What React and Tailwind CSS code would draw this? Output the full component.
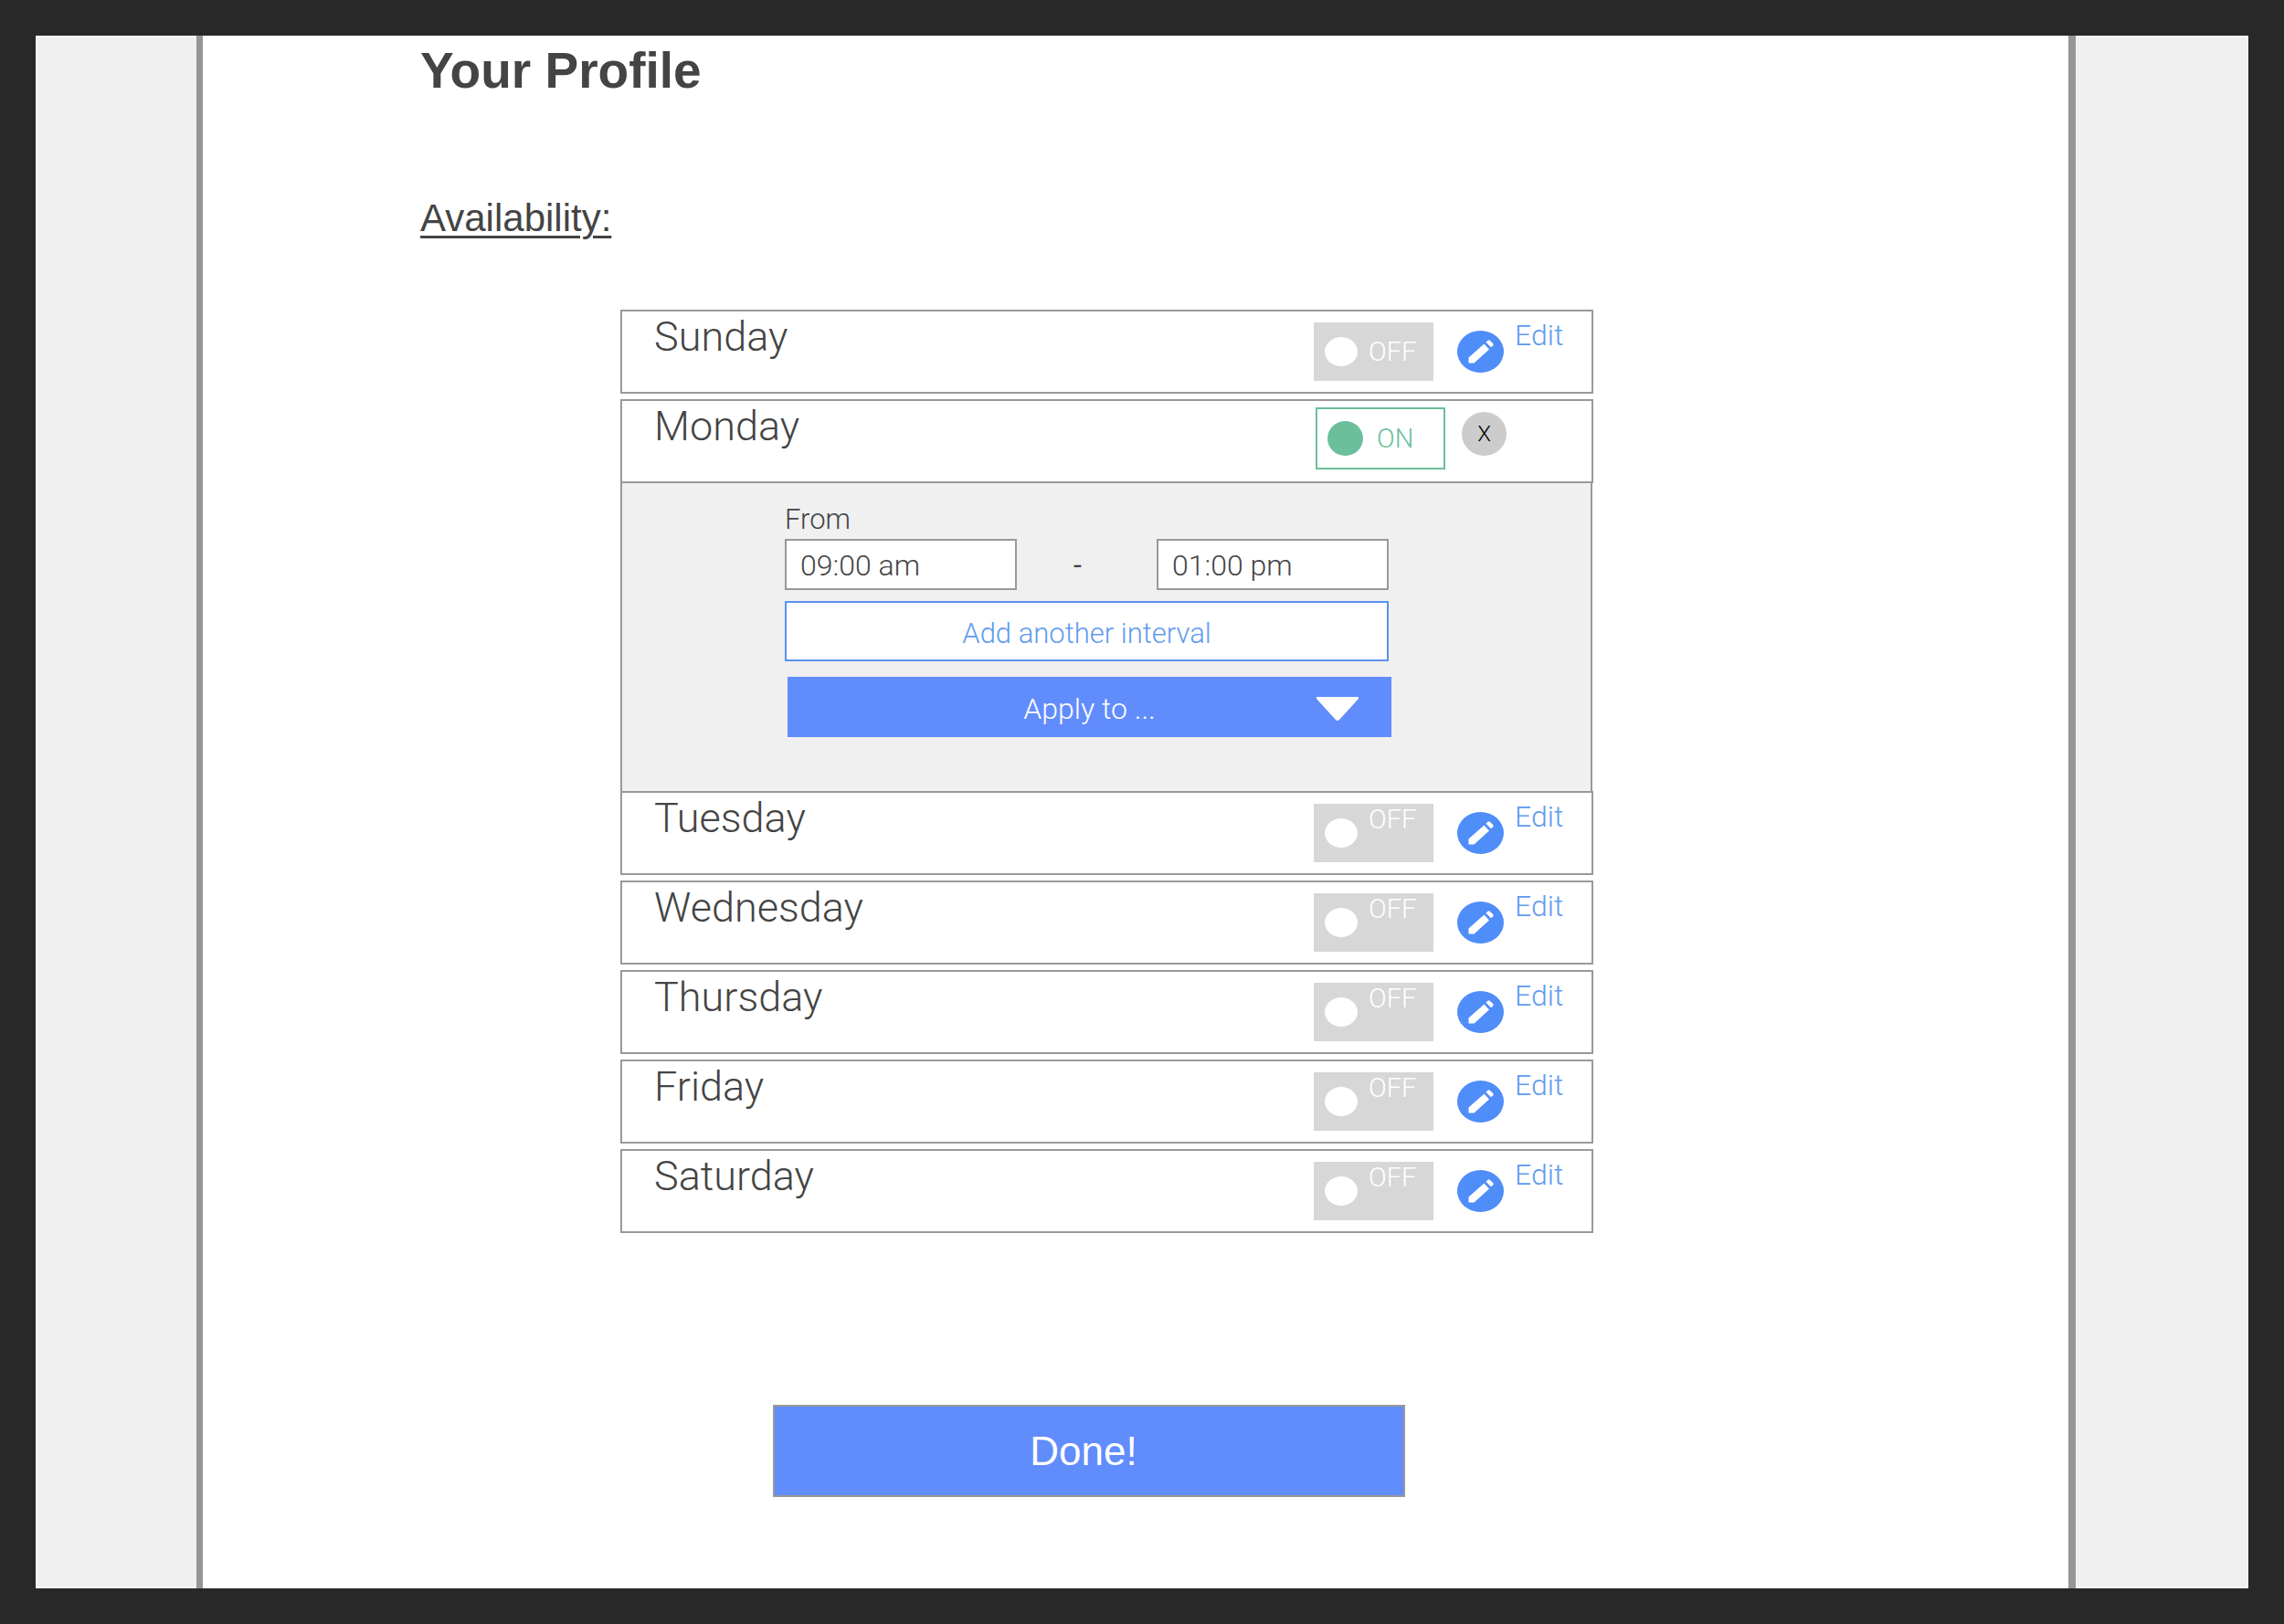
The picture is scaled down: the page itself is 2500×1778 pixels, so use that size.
import { useState } from "react";

const LIGHT = "font-['Roboto','Liberation_Sans',sans-serif] font-light";

function Switch({ day, on, centered, onToggle }) {
  if (on) {
    return (
      <button
        type="button"
        role="switch"
        aria-checked="true"
        aria-label={day + " availability"}
        onClick={onToggle}
        className="ml-[2px] mt-[7px] flex h-[68px] w-[142px] items-center border-2 border-[#6cbf9b] bg-white pl-[11px] text-[#6cbf9b]"
      >
        <span className="h-[38px] w-[39px] rounded-[50%] bg-[#6cbf9b]" />
        <span className="ml-[15px] text-[29px] leading-[34px]">ON</span>
      </button>
    );
  }
  return (
    <button
      type="button"
      role="switch"
      aria-checked="false"
      aria-label={day + " availability"}
      onClick={onToggle}
      className="mt-3 flex h-16 w-[131px] items-center bg-[#d7d7d7] pl-3 text-white"
    >
      <span className="h-8 w-9 rounded-[50%] bg-white" />
      <span className={"ml-3 text-[29px] leading-[34px] " + (centered ? "" : "self-start")}>OFF</span>
    </button>
  );
}

function PencilIcon() {
  return (
    <svg viewBox="0 0 51 46" className="h-[46px] w-[51px]" aria-hidden="true">
      <ellipse cx="25.5" cy="23" rx="25.5" ry="23" fill="#4f8df9" />
      <path fill="#fff" d="M12.500 29.500V35.500H18.500L35 20.500L29.500 14.500Z" />
      <path fill="#fff" d="M31.500 12.800l2-2q1-1 2.200 0l3.500 3.200q1 1 0 2.200L37 18.200Z" />
    </svg>
  );
}

function DayRow({ day, on, open, centered, onToggle, onOpen, onClose }) {
  return (
    <div className="flex h-[92px] items-start border-2 border-[#999999] bg-white pl-[35px]">
      <h3 className="mt-px flex-1 text-[45px] leading-[54px] text-[#444444]">{day}</h3>
      <div className="flex w-[304px] items-start">
        <Switch day={day} on={on} centered={centered} onToggle={onToggle} />
        {open ? (
          <button
            type="button"
            aria-label={"Close " + day}
            onClick={onClose}
            className="ml-[18px] mt-3 h-12 w-[49px] rounded-[50%] bg-[#cccccc] text-center text-2xl text-black"
          >
            X
          </button>
        ) : (
          <button type="button" onClick={onOpen} className="flex items-start text-[#5f9bf0]">
            <span className="ml-[26px] mt-[21px]">
              <PencilIcon />
            </span>
            <span className="ml-3 mt-[7px] text-[32px] leading-[38px]">Edit</span>
          </button>
        )}
      </div>
    </div>
  );
}

function TimeInput({ label, id, value }) {
  return (
    <input
      id={id}
      aria-label={label}
      type="text"
      defaultValue={value}
      className="h-14 w-[254px] border-2 border-[#999999] bg-white px-[15px] pt-[2px] text-[32px] leading-9 text-[#444444] outline-none"
    />
  );
}

function IntervalPanel() {
  return (
    <div className="-mt-[2px] mr-px flex h-[341px] flex-col border-2 border-[#999999] bg-[#f0f0f0] pl-[178px] pt-[18px]">
      <label htmlFor="from-time" className="text-[31px] leading-[43px] text-[#444444]">
        From
      </label>
      <div className="flex w-[661px] items-center justify-between">
        <TimeInput id="from-time" label="From" value="09:00 am" />
        <span className="mr-5 text-[32px] font-normal leading-9 text-[#444444]">-</span>
        <TimeInput id="to-time" label="To" value="01:00 pm" />
      </div>
      <button
        type="button"
        className="mt-3 h-[66px] w-[661px] border-2 border-[#5b91f0] bg-white pt-[7px] text-[31px] text-[#5f9bf0]"
      >
        Add another interval
      </button>
      <div className="relative ml-[3px] mt-[17px] w-[661px]">
        <select
          aria-label="Apply to"
          className="h-[66px] w-full appearance-none bg-[#618cfc] pt-1 text-center text-[32px] text-white [text-align-last:center]"
        >
          <option>Apply to ...</option>
        </select>
        <svg
          viewBox="0 0 46 26"
          className="pointer-events-none absolute right-9 top-[22px] h-[26px] w-[46px]"
          aria-hidden="true"
        >
          <path d="M0 0H46V2L25 25q-2 2-4 0L0 2Z" fill="#fff" />
        </svg>
      </div>
    </div>
  );
}

const DAYS = ["Sunday", "Monday", "Tuesday", "Wednesday", "Thursday", "Friday", "Saturday"];

export default function App() {
  const [active, setActive] = useState({ Monday: true });
  const [open, setOpen] = useState("Monday");

  return (
    <div className="flex min-h-screen border-[39px] border-[#292828] bg-[#f0f0f0] font-['Liberation_Sans',Arial,sans-serif]">
      <div className="w-44 shrink-0" />
      <main className="flex-1 border-l-[7px] border-r-8 border-[#969696] bg-white pb-[100px]">
        <div className="pl-[238px]">
          <h1 className="pt-[6px] text-[55px] font-bold leading-[64px] text-[#444444]">Your Profile</h1>
          <h2 className="mt-[106px] text-[42px] leading-[48px] text-[#444444] underline decoration-[3px] underline-offset-[5px]">
            Availability:
          </h2>
        </div>

        <section className={"ml-[457px] mt-[78px] max-w-[1065px] " + LIGHT}>
          {DAYS.map((day, i) => (
            <div key={day} className={i === 0 || open === DAYS[i - 1] ? "-mt-[2px]" : "mt-[6px]"}>
              <DayRow
                day={day}
                on={!!active[day]}
                open={open === day}
                centered={i === 0}
                onToggle={() => setActive({ ...active, [day]: !active[day] })}
                onOpen={() => setOpen(day)}
                onClose={() => setOpen("")}
              />
              {open === day && <IntervalPanel />}
            </div>
          ))}
        </section>

        <button
          type="button"
          className="ml-[624px] mt-[188px] block h-[101px] w-[692px] border-2 border-[#999999] bg-[#618cfc] pr-3 text-[44px] leading-[50px] text-white"
        >
          Done!
        </button>
      </main>
      <div className="w-[189px] shrink-0" />
    </div>
  );
}
